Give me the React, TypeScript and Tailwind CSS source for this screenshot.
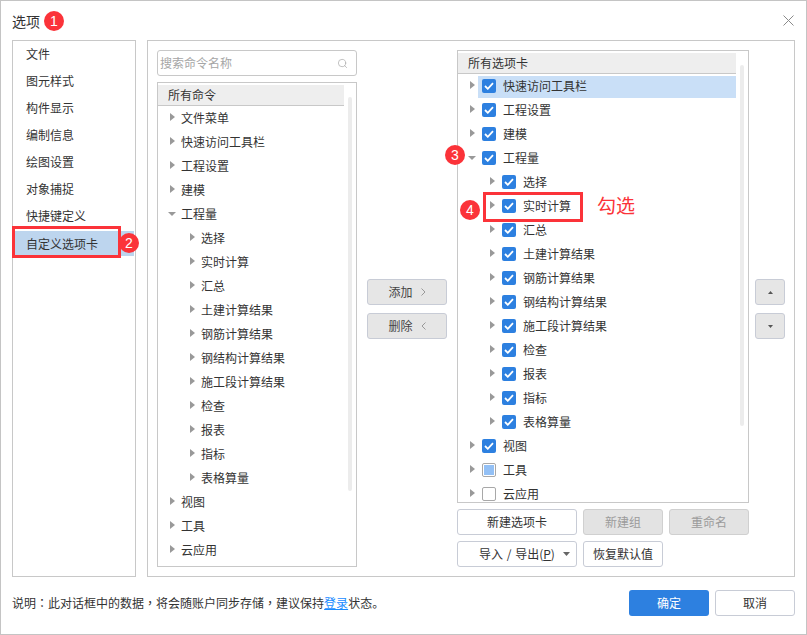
import React from 'react';
import { Search } from 'lucide-react';

const font = "font-['Noto_Sans_CJK_SC','Liberation_Sans',sans-serif]";

const leftItems = ['文件', '图元样式', '构件显示', '编制信息', '绘图设置', '对象捕捉', '快捷键定义'];

const subItems = [
  '选择',
  '实时计算',
  '汇总',
  '土建计算结果',
  '钢筋计算结果',
  '钢结构计算结果',
  '施工段计算结果',
  '检查',
  '报表',
  '指标',
  '表格算量',
];

type Row = { label: string; level: number; open?: boolean; check?: 'on' | 'part' | 'off'; active?: boolean };

const commandRows: Row[] = [
  { label: '文件菜单', level: 0 },
  { label: '快速访问工具栏', level: 0 },
  { label: '工程设置', level: 0 },
  { label: '建模', level: 0 },
  { label: '工程量', level: 0, open: true },
  ...subItems.map((label) => ({ label, level: 1 })),
  { label: '视图', level: 0 },
  { label: '工具', level: 0 },
  { label: '云应用', level: 0 },
];

const tabRows: Row[] = [
  { label: '快速访问工具栏', level: 0, check: 'on', active: true },
  { label: '工程设置', level: 0, check: 'on' },
  { label: '建模', level: 0, check: 'on' },
  { label: '工程量', level: 0, open: true, check: 'on' },
  ...subItems.map((label) => ({ label, level: 1, check: 'on' as const })),
  { label: '视图', level: 0, check: 'on' },
  { label: '工具', level: 0, check: 'part' },
  { label: '云应用', level: 0, check: 'off' },
];

function Arrow({ open }: { open?: boolean }) {
  if (open) {
    return (
      <svg width="8" height="4" viewBox="0 0 8 4" className="-ml-[2px] -mr-[1px] shrink-0">
        <path d="M0 0h8L4 4z" fill="#999" />
      </svg>
    );
  }
  return (
    <svg width="5" height="8" viewBox="0 0 5 8" className="shrink-0 -mt-[2px]">
      <path d="M0 0l5 4-5 4z" fill="#999" />
    </svg>
  );
}

function Check({ state }: { state: 'on' | 'part' | 'off' }) {
  if (state === 'off') {
    return <span className="w-[14px] h-[14px] shrink-0 rounded-[2px] border border-[#a8a8a8] bg-white" />;
  }
  if (state === 'part') {
    return (
      <span className="w-[14px] h-[14px] shrink-0 rounded-[2px] border border-[#a8a8a8] bg-white flex items-center justify-center">
        <span className="w-[10px] h-[10px] bg-[#93c0f5]" />
      </span>
    );
  }
  return (
    <span className="w-[14px] h-[14px] shrink-0 rounded-[2px] bg-[#2d80e0] flex items-center justify-center">
      <svg width="10" height="8" viewBox="0 0 10 8">
        <path d="M1 4l2.8 2.8L9 1.2" fill="none" stroke="#fff" strokeWidth="1.8" />
      </svg>
    </span>
  );
}

function Btn({ children, width, disabled }: { children: React.ReactNode; width: string; disabled?: boolean }) {
  return (
    <button
      className={`${width} h-[26px] rounded-[3px] border text-[12px] flex items-center justify-center ${
        disabled ? 'bg-[#e3e3e3] border-[#d0d0d0] text-[#9b9b9b]' : 'bg-white border-[#c8ccd6] text-[#333]'
      }`}
    >
      {children}
    </button>
  );
}

function GrayBtn({ children, flip }: { children: React.ReactNode; flip?: boolean }) {
  return (
    <button className="w-[80px] h-[26px] rounded-[3px] border border-[#c8ccd6] bg-[#e6e6e6] text-[12px] text-[#444] flex items-center justify-center gap-[8px]">
      {children}
      <svg width="5" height="8" viewBox="0 0 5 8">
        <path d={flip ? 'M4.5 .5L1 4l3.5 3.5' : 'M.5 .5L4 4 .5 7.5'} fill="none" stroke="#999" />
      </svg>
    </button>
  );
}

function Badge({ n, className }: { n: number; className: string }) {
  return (
    <span
      className={`absolute w-[20px] h-[20px] rounded-full bg-[#fb3339] text-white text-[14px] font-['Liberation_Sans',sans-serif] flex items-center justify-center ${className}`}
    >
      {n}
    </span>
  );
}

function Punct({ children }: { children: string }) {
  return <span className="font-['Noto_Sans_CJK_TC',sans-serif]">{children}</span>;
}

export default function App() {
  return (
    <div className={`relative w-[807px] h-[635px] bg-white border border-[#c4c4c4] flex flex-col overflow-hidden text-[#333] ${font}`}>
      {/* title */}
      <div className="h-[39px] shrink-0 flex items-center justify-between pl-[11px] pr-[12px]">
        <span className="text-[14px] leading-none">选项</span>
        <svg width="11" height="11" viewBox="0 0 11 11" className="mt-[-1px]">
          <path d="M.5 .5l10 10M10.5 .5l-10 10" fill="none" stroke="#8a8a8a" />
        </svg>
      </div>

      <div className="h-[537px] shrink-0 flex pl-[11px]">
        {/* nav */}
        <div className="w-[124px] h-full border border-[#c8c8c8]">
          {leftItems.map((item) => (
            <div key={item} className="h-[27px] pl-[13px] pb-[2px] flex items-center text-[12px]">
              {item}
            </div>
          ))}
          <div className="h-[25px] mt-[1px] w-[121px] bg-[#bdd5ee] pl-[13px] flex items-center text-[12px]">自定义选项卡</div>
        </div>

        {/* main panel */}
        <div className="ml-[11px] w-[648px] h-full border border-[#c8c8c8] pt-[9px] pl-[9px] flex">
          <div className="w-[200px] shrink-0">
            <div className="h-[26px] rounded-[3px] border border-[#c8c8c8] flex items-center justify-between pl-[2px] pr-[8px] text-[12px] text-[#a6a6a6]">
              <span>搜索命令名称</span>
              <Search className="w-[11px] h-[11px] text-[#a8a8a8]" strokeWidth={1.5} />
            </div>
            <div className="relative mt-[6px] h-[485px] border border-[#c8c8c8] pt-[2px] overflow-hidden">
              <div className="w-[186px] h-[20px] bg-[#eeeeee] pl-[10px] flex items-center text-[12px]">所有命令</div>
              <div className="w-[186px] h-[1px] bg-[#c8c8c8]" />
              {commandRows.map((r) => (
                <div
                  key={r.label}
                  className={`h-[24px] flex items-center gap-[6px] text-[12px] ${r.level ? 'pl-[32px]' : 'pl-[12px]'}`}
                >
                  <Arrow open={r.open} />
                  <span>{r.label}</span>
                </div>
              ))}
              <div className="absolute left-[190px] top-[14px] w-[4px] h-[394px] rounded-full bg-[#ececec]" />
            </div>
          </div>

          {/* add / remove */}
          <div className="w-[100px] shrink-0 pt-[229px] flex flex-col items-center gap-[8px]">
            <GrayBtn>添加</GrayBtn>
            <GrayBtn flip>删除</GrayBtn>
          </div>

          <div className="w-[292px] shrink-0">
            <div className="relative h-[453px] border border-[#c8c8c8] pt-[2px] overflow-hidden">
              <div className="w-[278px] h-[20px] bg-[#eeeeee] pl-[10px] flex items-center text-[12px]">所有选项卡</div>
              <div className="w-[278px] h-[1px] bg-[#c8c8c8]" />
              {tabRows.map((r) => (
                <div
                  key={r.label}
                  className={`relative h-[24px] flex items-center gap-[7px] text-[12px] ${r.level ? 'pl-[32px]' : 'pl-[12px]'}`}
                >
                  {r.active && <span className="absolute left-[20px] top-[2px] w-[258px] h-[22px] bg-[#c9dff7]" />}
                  <span className="relative flex items-center"><Arrow open={r.open} /></span>
                  <span className="relative flex items-center gap-[7px]">
                    <Check state={r.check ?? 'off'} />
                    <span>{r.label}</span>
                  </span>
                </div>
              ))}
              <div className="absolute left-[282px] top-[14px] w-[4px] h-[361px] rounded-full bg-[#ececec]" />
            </div>
            <div className="mt-[6px] flex gap-[6px]">
              <Btn width="w-[120px]">新建选项卡</Btn>
              <Btn width="w-[80px]" disabled>新建组</Btn>
              <Btn width="w-[80px]" disabled>重命名</Btn>
            </div>
            <div className="mt-[6px] flex gap-[6px]">
              <button className="relative w-[120px] h-[26px] rounded-[3px] border border-[#c8ccd6] bg-white text-[12px] flex items-center justify-center">
                <span className="[word-spacing:1px]">导入 / 导出(<span className="underline">P</span>)</span>
                <svg width="7" height="4" viewBox="0 0 7 4" className="absolute right-[6px] top-[10px]">
                  <path d="M0 0h7L3.5 4z" fill="#666" />
                </svg>
              </button>
              <Btn width="w-[80px]">恢复默认值</Btn>
            </div>
          </div>

          {/* move up / down */}
          <div className="ml-[6px] pt-[229px] flex flex-col gap-[8px]">
            <button className="w-[30px] h-[26px] rounded-[3px] border border-[#c8ccd6] bg-[#e6e6e6] flex items-center justify-center">
              <svg width="5" height="3" viewBox="0 0 5 3"><path d="M0 3h5L2.5 0z" fill="#555" /></svg>
            </button>
            <button className="w-[30px] h-[26px] rounded-[3px] border border-[#c8ccd6] bg-[#e6e6e6] flex items-center justify-center">
              <svg width="5" height="3" viewBox="0 0 5 3"><path d="M0 0h5L2.5 3z" fill="#555" /></svg>
            </button>
          </div>
        </div>
      </div>

      {/* footer */}
      <div className="flex-1 flex items-start justify-between pl-[11px] pr-[11px] pt-[13px]">
        <p className="text-[12px] leading-[26px]">
          说明<Punct>：</Punct>此对话框中的数据<Punct>，</Punct>将会随账户同步存储<Punct>，</Punct>建议保持<span className="text-[#1a8cff] underline">登录</span>状态。
        </p>
        <div className="flex gap-[6px]">
          <button className="w-[80px] h-[26px] rounded-[3px] bg-[#2d80e0] text-white text-[12px]">确定</button>
          <button className="w-[80px] h-[26px] rounded-[3px] border border-[#c8ccd6] bg-white text-[12px]">取消</button>
        </div>
      </div>

      {/* annotations */}
      <span className="absolute left-[11px] top-[225px] w-[109px] h-[32px] border-[3px] border-[#fb3339]" />
      <span className="absolute left-[482px] top-[191px] w-[100px] h-[30px] border-[3px] border-[#fb3339]" />
      <span className="absolute left-[596px] top-[191px] text-[19px] leading-[26px] text-[#fb3339]">勾选</span>
      <Badge n={1} className="left-[43px] top-[10px]" />
      <Badge n={2} className="left-[118px] top-[232px]" />
      <Badge n={3} className="left-[444px] top-[144px]" />
      <Badge n={4} className="left-[459px] top-[199px]" />
    </div>
  );
}
